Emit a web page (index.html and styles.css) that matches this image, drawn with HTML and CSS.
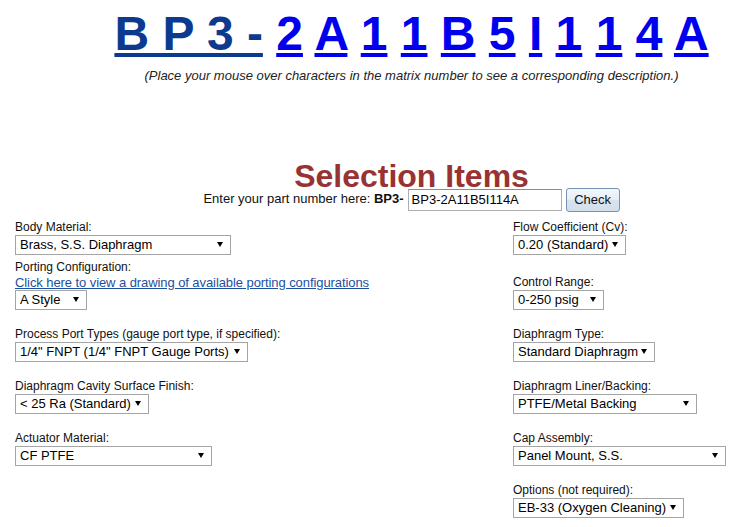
FILE: index.html
```html
<!DOCTYPE html>
<html lang="en">
<head>
    <meta charset="UTF-8">
    <title>BP3 Part Number Builder</title>
    <link rel="stylesheet" href="styles.css">
</head>
<body>

    <div class="page">

        <!-- Matrix number -->
        <div class="matrix">
            <a href="#" class="prefix">B P 3 -</a>
            <a href="#">2</a> <a href="#">A</a> <a href="#">1</a> <a href="#">1</a> <a href="#">B</a> <a href="#">5</a> <a href="#">I</a> <a href="#">1</a> <a href="#">1</a> <a href="#">4</a> <a href="#">A</a>
        </div>
        <p class="hint">(Place your mouse over characters in the matrix number to see a corresponding description.)</p>
        <div class="description"></div>

        <h1 class="section-title">Selection Items</h1>
        <form class="part-form" onsubmit="return false;">
            Enter your part number here: <b>BP3-</b><input type="text" class="part-input" value="BP3-2A11B5I114A"><button type="submit" class="check-btn">Check</button>
        </form>

        <div class="fields">
            <div class="row">
                <div class="field">
                    <label>Body Material:</label>
                    <span class="select"><select class="w-body"><option>Brass, S.S. Diaphragm</option></select></span>
                </div>
                <div class="field">
                    <label>Flow Coefficient (Cv):</label>
                    <span class="select"><select class="w-flow"><option>0.20 (Standard)</option></select></span>
                </div>
            </div>

            <div class="row close">
                <div class="field">
                    <label>Porting Configuration:</label>
                    <a href="#" class="drawing-link">Click here to view a drawing of available porting configurations</a>
                    <span class="select"><select class="w-style"><option>A Style</option></select></span>
                </div>
                <div class="field">
                    <label>Control Range:</label>
                    <span class="select"><select class="w-range"><option>0-250 psig</option></select></span>
                </div>
            </div>

            <div class="row">
                <div class="field">
                    <label>Process Port Types (gauge port type, if specified):</label>
                    <span class="select"><select class="w-port"><option>1/4" FNPT (1/4" FNPT Gauge Ports)</option></select></span>
                </div>
                <div class="field">
                    <label>Diaphragm Type:</label>
                    <span class="select"><select class="w-type"><option>Standard Diaphragm</option></select></span>
                </div>
            </div>

            <div class="row">
                <div class="field">
                    <label>Diaphragm Cavity Surface Finish:</label>
                    <span class="select"><select class="w-finish"><option>&lt; 25 Ra (Standard)</option></select></span>
                </div>
                <div class="field">
                    <label>Diaphragm Liner/Backing:</label>
                    <span class="select"><select class="w-liner"><option>PTFE/Metal Backing</option></select></span>
                </div>
            </div>

            <div class="row">
                <div class="field">
                    <label>Actuator Material:</label>
                    <span class="select"><select class="w-actuator"><option>CF PTFE</option></select></span>
                </div>
                <div class="field">
                    <label>Cap Assembly:</label>
                    <span class="select"><select class="w-cap"><option>Panel Mount, S.S.</option></select></span>
                </div>
            </div>

            <div class="row">
                <div></div>
                <div class="field">
                    <label>Options (not required):</label>
                    <span class="select"><select class="w-options"><option>EB-33 (Oxygen Cleaning)</option></select></span>
                </div>
            </div>
        </div>

    </div>

</body>
</html>
```

FILE: styles.css
```css
html {
    overflow: hidden;
}

body {
    margin: 0;
    font-family: Arial, "Liberation Sans", sans-serif;
    font-size: 12px;
    color: #111;
    background: #fff;
}

.page {
    width: 807px;
    margin-left: 8px;
}

/* Matrix number header */
.matrix {
    text-align: center;
    font-size: 48px;
    font-weight: bold;
    line-height: 54px;
    padding-top: 7px;
    white-space: nowrap;
}

.matrix a {
    color: #0000ee;
    text-decoration: underline;
}

.matrix a.prefix {
    color: #0c3a8f;
}

.hint {
    margin: 7px 0 0;
    text-align: center;
    font-style: italic;
    font-size: 13px;
    line-height: 15px;
    color: #222;
}

.description {
    height: 79px;
}

.section-title {
    margin: 0 0 -3px;
    text-align: center;
    font-size: 32px;
    line-height: 28px;
    color: #993333;
}

.part-form {
    margin: 0;
    text-align: center;
    font-size: 13px;
    color: #111;
    line-height: 24px;
}

.part-input {
    width: 154px;
    height: 22px;
    box-sizing: border-box;
    border: 1px solid #abadb3;
    border-top-color: #8a8d95;
    padding: 0 3px;
    font-family: Arial, "Liberation Sans", sans-serif;
    font-size: 13px;
    vertical-align: middle;
    margin: 0 4px;
}

.check-btn {
    width: 54px;
    height: 24px;
    box-sizing: border-box;
    border: 1px solid #7693b5;
    border-radius: 3px;
    background: linear-gradient(#f4f8fc, #e3ecf5 50%, #d7e4ef 51%, #d2e0ec);
    font-family: Arial, "Liberation Sans", sans-serif;
    font-size: 13px;
    color: #111;
    padding: 0;
    vertical-align: middle;
}

/* Selection fields */
.fields {
    padding: 8px 0 0 7px;
}

.row {
    display: grid;
    grid-template-columns: 498px 1fr;
    align-items: end;
    margin-top: 17px;
}

.row:first-child {
    margin-top: 0;
}

.row.close {
    margin-top: 5px;
}

.field label {
    display: block;
    line-height: 15px;
    color: #111;
}

.drawing-link {
    display: block;
    line-height: 15px;
    font-size: 13px;
    letter-spacing: -0.08px;
    color: #1d4f9e;
    text-decoration: underline;
}

.select {
    position: relative;
    display: inline-block;
    vertical-align: top;
}

.select::after {
    content: "";
    position: absolute;
    right: 8px;
    top: 7px;
    border-left: 3px solid transparent;
    border-right: 3px solid transparent;
    border-top: 5px solid #000;
    pointer-events: none;
}

.select select {
    appearance: none;
    -webkit-appearance: none;
    display: block;
    height: 20px;
    box-sizing: border-box;
    border: 1px solid #a5a5a5;
    border-radius: 0;
    background: #fff;
    padding: 0 0 0 4px;
    margin: 0;
    font-family: Arial, "Liberation Sans", sans-serif;
    font-size: 13px;
    color: #000;
}

.w-body { width: 216px; }
.w-style { width: 72px; }
.w-port { width: 233px; }
.w-finish { width: 134px; }
.w-actuator { width: 197px; }
.w-flow { width: 113px; }
.w-range { width: 91px; }
.w-type { width: 142px; }
.w-liner { width: 184px; }
.w-cap { width: 213px; }
.w-options { width: 171px; }
```
